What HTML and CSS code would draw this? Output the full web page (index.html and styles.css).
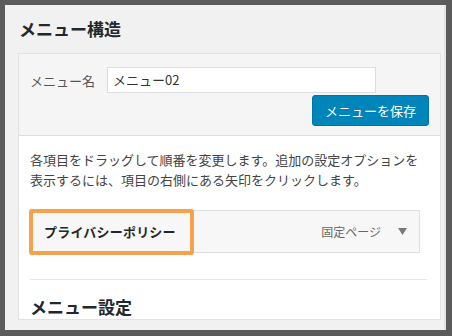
FILE: index.html
```html
<!DOCTYPE html>
<html lang="ja">
	<head>
		<meta charset="UTF-8" />
		<meta name="viewport" content="width=device-width, initial-scale=1.0" />
		<title>メニュー構造</title>
		<link rel="stylesheet" href="styles.css">
	</head>
	<body>
		<div class="screen">
			<h2 class="title">メニュー構造</h2>
			<div class="card">
				<div class="card-head">
					<div class="name-row">
						<label class="name-label">メニュー名</label>
						<div class="name-input">メニュー02</div>
					</div>
					<div class="save-row">
						<a href="#" class="save-btn">メニューを保存</a>
					</div>
				</div>
				<div class="card-body">
					<p class="desc">各項目をドラッグして順番を変更します。追加の設定オプションを<br>表示するには、項目の右側にある矢印をクリックします。</p>
					<div class="item">
						<span class="item-title">プライバシーポリシー</span>
						<span class="item-type">固定ページ</span>
						<svg class="item-arrow" width="9" height="7" viewBox="0 0 9 7"><polygon points="0,0 9,0 4.5,7" fill="#7a7a7a" /></svg>
						<div class="mark"></div>
					</div>
					<div class="line"></div>
					<h3 class="sub-title">メニュー設定</h3>
				</div>
			</div>
		</div>
	</body>
</html>
```

FILE: styles.css
```css
* {
	margin: 0;
	padding: 0;
	box-sizing: border-box;
}
body {
	background-color: #5b5b5b;
	font-family: "Noto Sans CJK JP", "Noto Sans", sans-serif;
	color: #444;
	overflow: hidden;
}
.screen {
	width: 441px;
	height: 325px;
	margin: 5px 0 0 5px;
	background-color: #f1f1f1;
	border-right: 2px solid #e4e4e4;
	overflow: hidden;
}
.title {
	font-size: 17px;
	line-height: 24px;
	font-weight: bold;
	color: #23282d;
	padding: 12px 0 0 14px;
}
.card {
	width: 423px;
	margin: 12px 0 0 13px;
	border: 1px solid #e2e2e2;
	background-color: #fff;
}
.card-head {
	background-color: #f5f5f5;
	border-bottom: 1px solid #dedede;
	padding: 13px 11px 9px 11px;
}
.name-row {
	display: flex;
	align-items: center;
	gap: 12px;
}
.name-label {
	font-size: 13px;
	color: #555;
	width: 65px;
}
.name-input {
	width: 269px;
	height: 26px;
	border: 1px solid #dcdcdc;
	background-color: #fff;
	font-size: 13px;
	line-height: 24px;
	padding-left: 5px;
	color: #333;
}
.save-row {
	display: flex;
	justify-content: flex-end;
	margin-top: 2px;
}
.save-btn {
	display: block;
	width: 117px;
	height: 31px;
	line-height: 29px;
	text-align: center;
	font-size: 13px;
	color: #fff;
	text-decoration: none;
	background-color: #0085ba;
	border: 1px solid #0073aa;
	border-radius: 3px;
}
.card-body {
	padding: 14px 0 0 11px;
}
.desc {
	font-size: 13px;
	line-height: 20px;
	color: #444;
	white-space: nowrap;
}
.item {
	position: relative;
	display: flex;
	align-items: center;
	width: 390px;
	height: 43px;
	margin-top: 20px;
	border: 1px solid #dfdfdf;
	background-color: #f7f7f7;
	padding: 0 12px 0 13px;
}
.item-title {
	font-size: 13px;
	font-weight: bold;
	letter-spacing: 0.2px;
	color: #23282d;
	flex: 1;
}
.item-type {
	font-size: 12px;
	color: #666;
	margin-right: 17px;
}
.mark {
	position: absolute;
	left: -2px;
	top: -2px;
	width: 165px;
	height: 46px;
	border: 4px solid #f5a24e;
	border-radius: 3px;
}
.line {
	width: 397px;
	margin-top: 26px;
	border-top: 1px solid #e6e6e6;
}
.sub-title {
	font-size: 17px;
	line-height: 24px;
	font-weight: bold;
	color: #23282d;
	padding-top: 15px;
}
```
